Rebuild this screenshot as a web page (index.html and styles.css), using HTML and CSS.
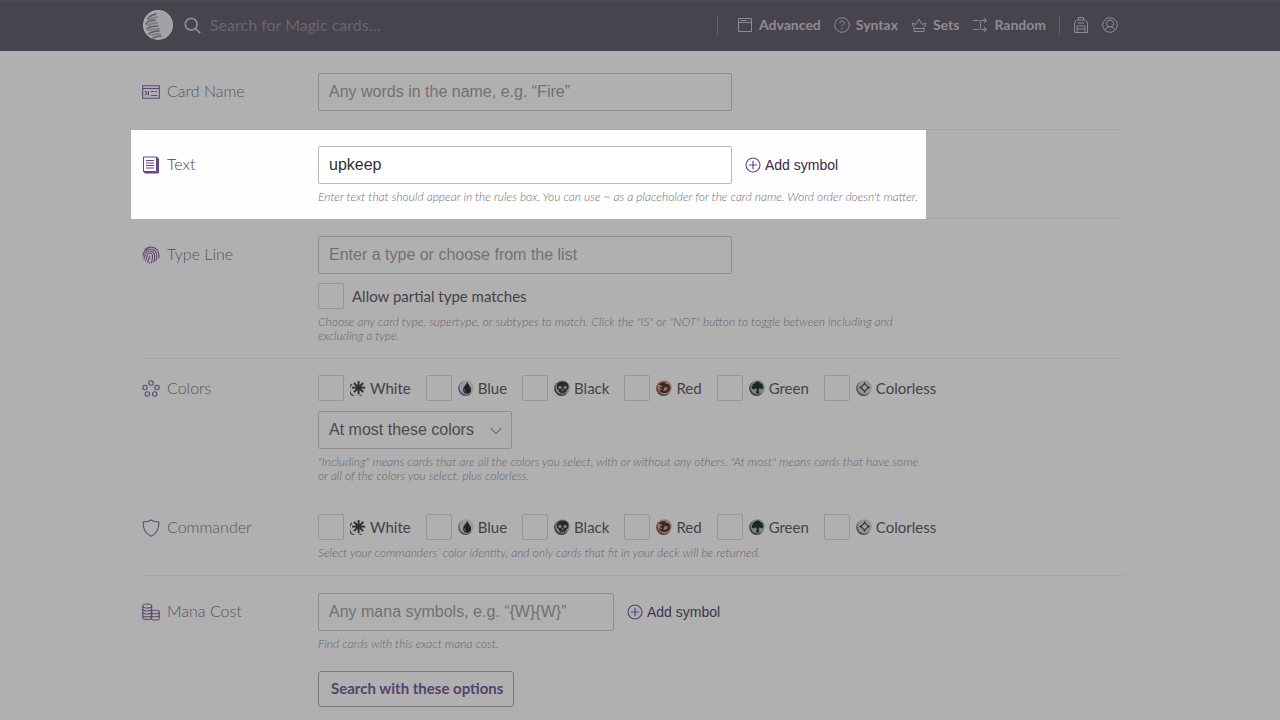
FILE: index.html
```html
<!DOCTYPE html>
<html lang="en">
<head>
<meta charset="utf-8">
<meta name="viewport" content="width=device-width, initial-scale=1">
<title>Advanced Search</title>
<link rel="stylesheet" href="styles.css">
</head>
<body>
<svg class="sprite" aria-hidden="true">
  <symbol id="plus" viewBox="0 0 16 16"><circle cx="8" cy="8" r="7"/><path d="M8 3.800v8.400M3.800 8h8.400"/></symbol>
  <symbol id="mana-w" viewBox="0 0 16 16"><path d="M2 4A7.200 7.200 0 0 0 11.500 15" fill="none" stroke="#44443f" stroke-width="1.300"/><circle cx="8.500" cy="7.500" r="7" fill="#aaa9a2"/><circle cx="8.600" cy="7.600" r="2.900" fill="#2f302b"/><path d="M8.600 1v13.200M2 7.600h13.200M4 3l9.200 9.200M13.200 3L4 12.200" stroke="#2f302b" stroke-width="1.800"/></symbol>
  <symbol id="mana-u" viewBox="0 0 16 16"><circle cx="7.600" cy="8.500" r="7.400" fill="#4d5156"/><circle cx="8.600" cy="7.500" r="7.200" fill="#969aa4"/><path d="M9.300 1.500c-.5 3-4.200 5-4.200 8.200a4 4 0 0 0 8 0c0-3-3.200-5-3.800-8.200z" fill="#202327"/><path d="M6.500 9c-.3 1.500.4 2.700 1.500 3" fill="none" stroke="#60656f"/></symbol>
  <symbol id="mana-b" viewBox="0 0 16 16"><circle cx="7.600" cy="8.500" r="7.400" fill="#353535"/><circle cx="8.600" cy="7.500" r="7.200" fill="#8b8987"/><path d="M8.600 1.500c-3.500 0-5.900 2-5.900 5 0 2 .7 3.200 2.200 3.600v2l1.200.2v1.200h5.100v-1.200l1.200-.2v-2c1.500-.4 2.200-1.600 2.200-3.600 0-3-2.500-5-6-5z" fill="#292929"/><circle cx="6" cy="7.400" r="1.600" fill="#858383"/><circle cx="11.200" cy="7.400" r="1.600" fill="#858383"/><path d="M8.600 8.800l-.8 1.700h1.600zM7.500 11.700v1.600M9.700 11.700v1.600" fill="#858383" stroke="#858383" stroke-width=".5"/></symbol>
  <symbol id="mana-r" viewBox="0 0 16 16"><circle cx="7.600" cy="8.500" r="7.400" fill="#4b3933"/><circle cx="8.600" cy="7.500" r="7.200" fill="#9a786c"/><path d="M2.500 4.700c2-2.300 5-3.400 8-2-1 .2-1.500.7-1.400 1.300 1.800-.5 5 .2 5.200 3.500.1 3-2.400 5.600-5.800 5.600-3.200 0-5.300-1.600-6-4.600 1 1.500 2.600 1.900 3.600.8C5 8.500 3.600 8 3.500 6.400c1.200.8 2 .6 2.800 0-1-1-2.200-1.500-3.800-1.700z" fill="#3b2924"/><path d="M7 10.500c3 .8 5-.7 4.600-3.700-1.200 1.200-2.800.8-3.500-.2.600 1.500.1 2.700-1.100 3.900z" fill="#9a786c"/></symbol>
  <symbol id="mana-g" viewBox="0 0 16 16"><circle cx="7.600" cy="8.500" r="7.400" fill="#343d36"/><circle cx="8.600" cy="7.500" r="7.200" fill="#7b8580"/><path d="M8.600 1.600c-1.600 0-2.300.9-2.600 1.700-2-.2-2.600 1.200-2.300 2.400-1.400.8-1.500 3 .2 3.500 1.300.3 2-.4 2.600-1l1.100.7c.2 2-.1 3.300-1 4.700h4.200c-1-1.400-1.200-2.700-1-4.700l1-.7c.7.800 1.500 1.300 2.500.8 1.600-.7 1.300-2.600.3-3.300.4-1.400-.6-2.600-2.200-2.300-.5-1.200-1.500-1.800-2.800-1.800z" fill="#1d2821"/></symbol>
  <symbol id="mana-c" viewBox="0 0 16 16"><circle cx="7.600" cy="8.500" r="7.400" fill="#4c4a48"/><circle cx="8.600" cy="7.500" r="7.200" fill="#969492"/><path d="M8.600 1.800c.9 2.800 2.900 4.800 5.700 5.700-2.800.9-4.800 2.900-5.700 5.700-.9-2.800-2.900-4.800-5.700-5.700 2.800-.9 4.800-2.900 5.700-5.700z" fill="#302e2c"/><path d="M8.600 4.500l3 3-3 3-3-3z" fill="#a09e9c"/></symbol>
</svg>

<header class="site-header">
  <div class="container header-inner">
    <a class="logo" href="#" aria-label="Home">
      <svg width="30" height="30" viewBox="0 0 30 30"><circle cx="15" cy="15" r="15" fill="#b1afb2"/><circle cx="15" cy="15" r="14" fill="#a4a1a5"/><g fill="none" stroke-linecap="round"><path d="M5 9c1-3 4-4 8-5M3 14c1-3 4-3 9-4M4 19c1-2 5-3 11-3M6 24c2-2 5-3 10-3M10 28c2-1 4-2 8-2" stroke="#625e64" stroke-width="1.600"/><path d="M6 10c2-1 4-2 8-3M5 15c2-1 4-2 9-2M6 20c2-1 5-1 10-1M9 25c2-1 5-1 8-1" stroke="#837f84" stroke-width="2"/></g></svg>
    </a>
    <form class="header-search">
      <label for="site-search" aria-label="Search"><svg class="icon" width="18" height="18" viewBox="0 0 18 18"><circle cx="7.200" cy="8.200" r="5.900"/><path d="M11.400 12.400l4.800 4.800"/></svg></label>
      <input id="site-search" type="text" placeholder="Search for Magic cards…">
    </form>
    <nav class="site-nav">
      <span class="rule"></span>
      <a href="#"><svg class="icon" width="16" height="16" viewBox="0 0 16 16"><path d="M1.500 1.500h13v13h-13zM1.500 5.500h13M3.500 3.500h6M11.500 3.500h1"/></svg>Advanced</a>
      <a href="#"><svg class="icon" width="16" height="16" viewBox="0 0 16 16"><circle cx="8" cy="8" r="7.300"/><path d="M5.800 6.200c0-3 4.500-2.800 4.500-.2 0 1.700-2.200 1.500-2.200 3.600M8.100 11v1.300"/></svg>Syntax</a>
      <a href="#"><svg class="icon" width="16" height="16" viewBox="0 0 16 16"><path d="M3 14.500V11L1 6l4 1.500 3-5.500 3 5.500L15 6l-2 5v3.500zM3 11.500h10"/></svg>Sets</a>
      <a href="#"><svg class="icon" width="16" height="16" viewBox="0 0 16 16"><path d="M1 3.500h4.500c2 0 3 1 3 3v3c0 2-1 3-3 3H1M8.500 3.500h6M8.500 12.500h6M12 1l2.500 2.500L12 6M12 10l2.500 2.500L12 15"/></svg>Random</a>
      <span class="rule"></span>
      <a href="#" aria-label="Decks"><svg class="icon" width="16" height="16" viewBox="0 0 16 16"><path d="M1.500 15.500V7c0-3 2-4 3.500-4h6c1.500 0 3.500 1 3.500 4v8.500zM5.500 3V.5h5V3M4 15V9h8v6M4 12h8M5 6h6"/></svg></a>
      <a href="#" aria-label="Account"><svg class="icon" width="16" height="16" viewBox="0 0 16 16"><circle cx="8" cy="8" r="7.300"/><circle cx="8" cy="6.500" r="3.500"/><path d="M3 13c.3-1.800 1.500-2 3.300-2.500V9.600M13 13c-.3-1.800-1.500-2-3.300-2.500V9.600"/></svg></a>
    </nav>
  </div>
</header>

<main class="container">
  <form class="search-form">
    <div class="row">
      <label class="name" for="card-name"><svg class="icon" width="18" height="18" viewBox="0 0 18 18"><path d="M.7 2.700h16.600v12.600H.7zM.7 5.500h16.600M3 8l2 2-2 2M6.500 8v4.500M9 8.500h3M13 8.500h2M9 12.500h6"/></svg>Card Name</label>
      <div class="field"><input class="text" id="card-name" type="text" placeholder="Any words in the name, e.g. “Fire”"></div>
    </div>

    <div class="row active">
      <label class="name" for="rules-text"><svg class="icon" width="18" height="18" viewBox="0 0 18 18"><path d="M1.500 1h13v14.500h-13zM14.500 1l2 1.500V17H3l-1.500-1.500M15.500 2v14.500H3M4 4.500h8M4 7h8M4 9.500h8M4 12h8"/></svg>Text</label>
      <div class="field">
        <div class="line"><input class="text" id="rules-text" type="text" value="upkeep"><button class="add" type="button"><svg class="icon" width="16" height="16"><use href="#plus"/></svg>Add symbol</button></div>
        <p class="hint">Enter text that should appear in the rules box. You can use ~ as a placeholder for the card name. Word order doesn't matter.</p>
      </div>
    </div>

    <div class="row type">
      <label class="name" for="type-line"><svg class="icon" width="18" height="18" viewBox="0 0 18 18"><path d="M2.500 4.500C6-.8 15.500 0 16.700 8c.3 1.700.3 3 0 4.500M.8 10.500C1 6 4 2.700 8.500 3c4 0 6.200 3.500 6.200 7 0 2-.2 3.500-.9 5M1.500 13c1.300-1 1.300-2.500 1.500-4 .8-5.200 8.500-5.500 9.500 0 .4 2.800 0 5-.8 7.500M3 15c1.500-1.300 2-3.200 2-5 .3-4 5.300-4 5.500 0 .1 2.800-.3 5-1.300 7.300M5 16.500c1.700-2 2.600-4 2.700-6.800M6.900 17.400l.7-1.400"/></svg>Type Line</label>
      <div class="field">
        <input class="text" id="type-line" type="text" placeholder="Enter a type or choose from the list">
        <div class="checks"><label><input type="checkbox"><span>Allow partial type matches</span></label></div>
        <p class="hint">Choose any card type, supertype, or subtypes to match. Click the "IS" or "NOT" button to toggle between including and excluding a type.</p>
      </div>
    </div>

    <div class="row colors plain">
      <label class="name" for="color-mode"><svg class="icon" width="18" height="18" viewBox="0 0 18 18"><circle cx="9" cy="3" r="2.200"/><circle cx="3" cy="7.500" r="2.200"/><circle cx="15" cy="7.500" r="2.200"/><circle cx="5.300" cy="14" r="2.200"/><circle cx="12.700" cy="14" r="2.200"/></svg>Colors</label>
      <div class="field">
        <div class="checks">
          <label><input type="checkbox"><svg width="16" height="16"><use href="#mana-w"/></svg>White</label>
          <label><input type="checkbox"><svg width="16" height="16"><use href="#mana-u"/></svg>Blue</label>
          <label><input type="checkbox"><svg width="16" height="16"><use href="#mana-b"/></svg>Black</label>
          <label><input type="checkbox"><svg width="16" height="16"><use href="#mana-r"/></svg>Red</label>
          <label><input type="checkbox"><svg width="16" height="16"><use href="#mana-g"/></svg>Green</label>
          <label><input type="checkbox"><svg width="16" height="16"><use href="#mana-c"/></svg>Colorless</label>
        </div>
        <div class="picker">
          <select id="color-mode"><option>At most these colors</option><option>Exactly these colors</option><option>Including these colors</option></select>
          <svg class="icon" width="12" height="8" viewBox="0 0 12 8"><path d="M.5 1L6 6.500 11.500 1"/></svg>
        </div>
        <p class="hint">"Including" means cards that are all the colors you select, with or without any others. "At most" means cards that have some or all of the colors you select, plus colorless.</p>
      </div>
    </div>

    <div class="row commander">
      <span class="name"><svg class="icon" width="18" height="18" viewBox="0 0 18 18"><path d="M9 1c2 1.500 4.700 2 7.800 2C17 9.500 15 14.500 9 17.200 3 14.500 1 9.500 1.200 3 4.300 3 7 2.500 9 1z"/></svg>Commander</span>
      <div class="field">
        <div class="checks">
          <label><input type="checkbox"><svg width="16" height="16"><use href="#mana-w"/></svg>White</label>
          <label><input type="checkbox"><svg width="16" height="16"><use href="#mana-u"/></svg>Blue</label>
          <label><input type="checkbox"><svg width="16" height="16"><use href="#mana-b"/></svg>Black</label>
          <label><input type="checkbox"><svg width="16" height="16"><use href="#mana-r"/></svg>Red</label>
          <label><input type="checkbox"><svg width="16" height="16"><use href="#mana-g"/></svg>Green</label>
          <label><input type="checkbox"><svg width="16" height="16"><use href="#mana-c"/></svg>Colorless</label>
        </div>
        <p class="hint">Select your commanders’ color identity, and only cards that fit in your deck will be returned.</p>
      </div>
    </div>

    <div class="row plain">
      <label class="name" for="mana-cost"><svg class="icon" width="18" height="18" viewBox="0 0 18 18"><ellipse cx="5.200" cy="3" rx="4.500" ry="2"/><path d="M.7 3v11.500c0 2.700 9 2.700 9 0V3M.7 6c0 2.600 9 2.600 9 0M.7 9c0 2.600 9 2.600 9 0M.7 12c0 2.600 9 2.600 9 0M9.300 9v6.200c0 2.400 8 2.400 8 0V9M9.300 12c0 2.400 8 2.400 8 0"/><ellipse cx="13.300" cy="9" rx="4" ry="1.800"/></svg>Mana Cost</label>
      <div class="field">
        <div class="line"><input class="text short" id="mana-cost" type="text" placeholder="Any mana symbols, e.g. “{W}{W}”"><button class="add" type="button"><svg class="icon" width="16" height="16"><use href="#plus"/></svg>Add symbol</button></div>
        <p class="hint">Find cards with this exact mana cost.</p>
        <button class="submit" type="submit">Search with these options</button>
      </div>
    </div>
  </form>
</main>
</body>
</html>
```
FILE: styles.css
```css
* { box-sizing: border-box; }

body {
  margin: 0;
  padding-right: 14px;
  background: #b0b0b0;
  color: #444247;
  font-family: Lato, "Liberation Sans", sans-serif;
  font-size: 15px;
}

.sprite { position: absolute; width: 0; height: 0; }

.icon { fill: none; stroke: currentColor; stroke-width: 1; flex: none; }

.container { max-width: 982px; margin: 0 auto; }

.site-header {
  margin-right: -14px;
  padding-right: 14px;
  background: #48444e;
  border-top: 2px solid #4e4956;
  color: #8e8b92;
}

.header-inner {
  display: flex;
  align-items: center;
  height: 49px;
  padding: 0 6px 3px 1px;
}

.logo { display: flex; margin-right: 11px; }

.header-search { display: flex; align-items: center; flex: 1; gap: 8px; }
.header-search label { display: flex; }
.header-search .icon { stroke-width: 1.7; }
.header-search input {
  flex: 1;
  min-width: 0;
  padding: 0 0 1px;
  border: 0;
  background: none;
  color: inherit;
  font: 16px Lato, sans-serif;
  outline: 0;
}
.header-search input::placeholder { color: #69666e; opacity: 1; }

.site-nav { display: flex; align-items: center; gap: 13px; }
.site-nav a {
  display: flex;
  align-items: center;
  gap: 6px;
  color: inherit;
  font-size: 14px;
  font-weight: 700;
  line-height: 18px;
  text-decoration: none;
}
.rule { width: 1px; height: 20px; margin-right: 6px; background: #625e67; }
a + .rule { margin-right: 0; }

.row {
  position: relative;
  display: grid;
  grid-template-columns: 176px 1fr;
  padding: 17px 0 14px;
  border-bottom: 1px solid #a7a7a7;
}
.row:first-child { padding: 22px 0 18px; }
.row.plain { border-bottom: 0; }
.row.active { padding-top: 16px; }
.row.type { padding-bottom: 15px; }
.row.colors { padding: 16px 0 15px; }
.row.commander { padding: 16px 0 15px; }

.row.active::before {
  content: "";
  position: absolute;
  inset: 0 198px -1px -11px;
  background: #fefefe;
}
.row.active > * { position: relative; }

.name {
  display: flex;
  align-items: center;
  align-self: start;
  gap: 7px;
  height: 34px;
  color: #565458;
  font-size: 16px;
  font-weight: 300;
}
.name .icon { margin-top: 3px; color: #5c4a71; stroke-width: 1.1; }
.active .name { color: #454347; }
.active .name .icon { color: #65458c; stroke-width: 1; }
.colors .name, .commander .name { height: 24px; }

.field { min-width: 0; }

.line { display: flex; align-items: center; gap: 13px; }

.text, .picker select {
  display: block;
  width: 414px;
  height: 38px;
  padding: 0 10px;
  border: 1px solid #8f8e90;
  border-radius: 2px;
  background: transparent;
  color: #4b4a4d;
  font: 16px "Liberation Sans", Arial, sans-serif;
  outline: 0;
}
.text.short { width: 296px; }
.text::placeholder { color: #727173; opacity: 1; }
.active .text { color: #302e32; border-color: #b9b8ba; background: #fff; }
.picker select { padding-bottom: 2px; }

.add {
  display: flex;
  align-items: center;
  gap: 4px;
  padding: 0;
  border: 0;
  background: none;
  color: #413349;
  font: 14px "Liberation Sans", Arial, sans-serif;
}
.add .icon { color: #594477; stroke-width: 1.2; }
.active .add { color: #3b2748; }
.active .add .icon { color: #65469b; }

.hint {
  max-width: 608px;
  margin: 6px 0 0;
  color: #67656a;
  font-size: 12px;
  font-style: italic;
  font-weight: 300;
  line-height: 14px;
}
.active .hint { color: #6f6c73; }

.checks { display: flex; flex-wrap: wrap; gap: 15px; }
.text + .checks { margin-top: 9px; }
.checks label { display: flex; align-items: center; height: 26px; gap: 4px; }
.checks span { margin-left: 4px; }
.checks svg { margin-left: 2px; }
.checks input {
  appearance: none;
  width: 26px;
  height: 26px;
  margin: 0;
  border: 1px solid #979698;
  border-radius: 2px;
}

.picker { position: relative; width: 194px; margin-top: 10px; }
.picker select { appearance: none; width: 100%; }
.picker .icon { position: absolute; right: 10px; top: 16px; pointer-events: none; }

.submit {
  height: 36px;
  margin-top: 20px;
  padding: 0 10px 3px 12px;
  border: 1px solid #7c7582;
  border-radius: 3px;
  background: transparent;
  color: #54436c;
  font: 700 15px Lato, sans-serif;
}
```
